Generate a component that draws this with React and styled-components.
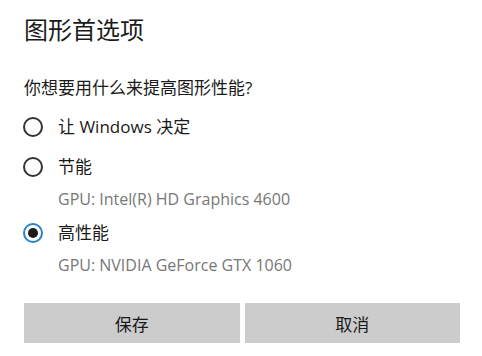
import React, { useState } from "react";
import styled, { createGlobalStyle } from "styled-components";

const GlobalStyle = createGlobalStyle`
    html, body {
        margin: 0;
        padding: 0;
        background: #ffffff;
    }
`;

const FONT = `"Open Sans", "Noto Sans CJK SC", sans-serif`;

const Dialog = styled.div`
    width: 482px;
    height: 356px;
    box-sizing: border-box;
    padding: 14px 22px 0 24px;
    display: flex;
    flex-direction: column;
    font-family: ${FONT};
    color: #1a1a1a;
    background: #fff;
`;

const Title = styled.h1`
    margin: 0;
    font-size: 24px;
    font-weight: 400;
    line-height: 32px;
    color: #1b1b1b;
`;

const Question = styled.div`
    margin-top: 30px;
    font-size: 17px;
    line-height: 24px;
`;

const OptionList = styled.div`
    margin-top: 11px;
    display: flex;
    flex-direction: column;
    gap: 8px;
`;

const Option = styled.div`
    display: flex;
    flex-direction: column;
`;

const OptionRow = styled.label`
    height: 32px;
    display: flex;
    align-items: center;
    gap: 15px;
    cursor: pointer;
`;

const Radio = styled.span`
    width: 20px;
    height: 20px;
    box-sizing: border-box;
    border-radius: 50%;
    border: 2px solid ${(p) => (p.$checked ? "#2a82c8" : "#333")};
    display: flex;
    align-items: center;
    justify-content: center;
    margin-left: -1px;

    &::after {
        content: "";
        width: 10px;
        height: 10px;
        border-radius: 50%;
        background: #1c1c1c;
        display: ${(p) => (p.$checked ? "block" : "none")};
    }
`;

const OptionLabel = styled.span`
    font-size: 17px;
    line-height: 24px;
    color: #1a1a1a;
`;

const Hint = styled.div`
    margin-top: 6px;
    padding-left: 34px;
    font-size: 16px;
    line-height: 20px;
    color: #777777;
`;

const ButtonBar = styled.div`
    margin-top: 28px;
    display: flex;
    gap: 5px;
`;

const Button = styled.button`
    flex: 1;
    height: 40px;
    border: none;
    background: #cccccc;
    font-family: ${FONT};
    font-size: 17px;
    color: #1a1a1a;
    cursor: pointer;
`;

const options = [
    { id: "auto", label: "让 Windows 决定" },
    { id: "save", label: "节能", hint: "GPU: Intel(R) HD Graphics 4600" },
    { id: "perf", label: "高性能", hint: "GPU: NVIDIA GeForce GTX 1060" },
];

export default function App() {
    const [choice, setChoice] = useState("perf");

    return (
        <>
            <GlobalStyle />
            <Dialog>
                <Title>图形首选项</Title>
                <Question>你想要用什么来提高图形性能?</Question>
                <OptionList>
                    {options.map((o) => (
                        <Option key={o.id}>
                            <OptionRow onClick={() => setChoice(o.id)}>
                                <Radio $checked={choice === o.id} />
                                <OptionLabel>{o.label}</OptionLabel>
                            </OptionRow>
                            {o.hint && <Hint>{o.hint}</Hint>}
                        </Option>
                    ))}
                </OptionList>
                <ButtonBar>
                    <Button>保存</Button>
                    <Button>取消</Button>
                </ButtonBar>
            </Dialog>
        </>
    );
}
